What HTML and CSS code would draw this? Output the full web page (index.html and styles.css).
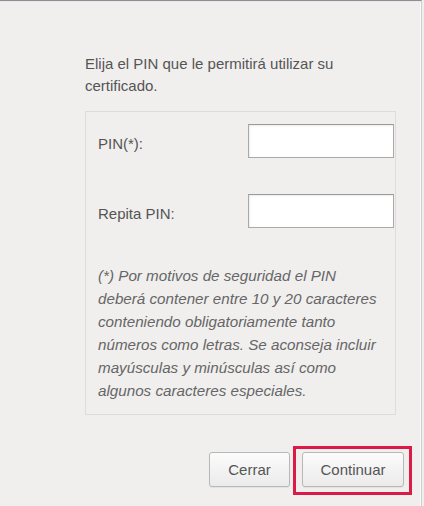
FILE: index.html
```html
<!DOCTYPE html>
<html lang="es">
<head>
<meta charset="utf-8">
<title>PIN</title>
<link rel="stylesheet" href="styles.css">
</head>
<body>
<div class="dialog">
  <p class="intro">Elija el PIN que le permitirá utilizar su certificado.</p>
  <div class="box">
    <div class="row">
      <label class="label" for="pin1">PIN(*):</label>
      <input class="field" id="pin1" type="password">
    </div>
    <div class="row row-second">
      <label class="label" for="pin2">Repita PIN:</label>
      <input class="field" id="pin2" type="password">
    </div>
    <p class="note">(*) Por motivos de seguridad el PIN<br>deberá contener entre 10 y 20 caracteres<br>conteniendo obligatoriamente tanto<br>números como letras. Se aconseja incluir<br>mayúsculas y minúsculas así como<br>algunos caracteres especiales.</p>
  </div>
  <div class="actions">
    <button class="btn btn-close" type="button">Cerrar</button>
    <span class="highlight"><button class="btn btn-continue" type="button">Continuar</button></span>
  </div>
</div>
</body>
</html>
```
FILE: styles.css
```css
html, body {
  margin: 0;
  padding: 0;
  background: #f0efee;
}
body {
  font-family: "Liberation Sans", Arial, sans-serif;
  color: #555555;
}
.dialog {
  box-sizing: border-box;
  width: 422px;
  height: 506px;
  border-top: 1px solid #8e8e8e;
  border-right: 1px solid #cfcfcf;
  box-shadow: inset 0 1px 0 #e6eaf0, inset -1px 0 0 #fafafa;
  padding: 52px 0 0 85px;
  background: #f0efee;
}
.intro {
  margin: 0;
  width: 311px;
  font-size: 15px;
  line-height: 22px;
  color: #555555;
}
.box {
  box-sizing: border-box;
  width: 311px;
  margin-top: 14px;
  border: 1px solid #dcdcdc;
  padding: 12px 1px 12px 12px;
}
.row {
  display: flex;
  justify-content: space-between;
  align-items: center;
  height: 34px;
}
.row-second {
  margin-top: 36px;
}
.label {
  font-size: 15px;
  color: #555555;
  padding-top: 4px;
}
.field {
  box-sizing: border-box;
  width: 146px;
  height: 34px;
  margin: 0;
  border: 1px solid #a9a9a9;
  border-top-color: #9a9a9a;
  background: #ffffff;
  box-shadow: inset 1px 1px 2px rgba(0, 0, 0, 0.08);
  outline: none;
}
.note {
  margin: 36px 0 0 0;
  font-size: 15.2px;
  line-height: 23px;
  font-style: italic;
  color: #666666;
  white-space: nowrap;
}
.actions {
  display: flex;
  justify-content: flex-end;
  align-items: flex-start;
  margin-top: 31px;
  margin-right: 9px;
}
.btn {
  box-sizing: border-box;
  height: 35px;
  margin: 0;
  padding: 0;
  border: 1px solid #b8b8b8;
  border-radius: 3px;
  background: linear-gradient(#fbfbfb, #ebebeb);
  box-shadow: 0 1px 1px rgba(0, 0, 0, 0.06);
  font-family: "Liberation Sans", Arial, sans-serif;
  font-size: 15px;
  color: #555555;
}
.btn-close {
  width: 81px;
  margin-top: 6px;
  margin-right: 3px;
}
.btn-continue {
  width: 102px;
  display: block;
}
.highlight {
  display: block;
  border: 3px solid #dc1a48;
  padding: 3px 5px 5px 6px;
}
```
